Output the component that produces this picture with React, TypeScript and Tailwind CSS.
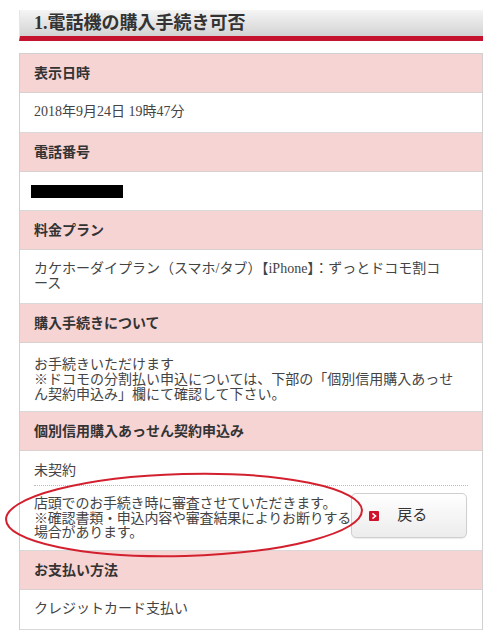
const font = { fontFamily: '"Liberation Serif", "Noto Sans CJK JP", serif' };

function Head({ children }: { children: React.ReactNode }) {
  return (
    <div className="h-[39px] flex items-center px-[14px] bg-[#f6d4d4] border-b border-[#d9d0d0] text-[14px] font-bold text-[#333]">
      {children}
    </div>
  );
}

function Value({ h, pt = "pt-[11px]", children }: { h: string; pt?: string; children: React.ReactNode }) {
  return (
    <div className={`${h} ${pt} overflow-hidden px-[14px] leading-[15px] text-[14px] text-[#444] border-b border-[#d9d9d9] bg-white`}>
      {children}
    </div>
  );
}

export default function App() {
  return (
    <div className="relative w-[500px] h-[644px] bg-white overflow-hidden" style={font}>
      <div className="pl-[19px] pr-[17px] pt-[10px]">
        <div className="h-[31px] bg-gradient-to-b from-[#f5f5f5] to-[#d3d3d3] border-l border-[#e6e6e6] border-b-[5px] border-b-[#c4122f] flex items-center pl-[14px]">
          <span className="text-[18px] font-bold text-[#333] leading-none">
            1.電話機の購入手続き可否
          </span>
        </div>

        <div className="mt-[12px] border-x border-t border-[#d0d0d0]">
          <Head>表示日時</Head>
          <Value h="h-[40px]">2018年9月24日 19時47分</Value>

          <Head>電話番号</Head>
          <Value h="h-[39px]">
            <div className="h-[15px] flex items-center pt-[2px]">
              <div className="ml-[-3px] w-[92px] h-[13px] bg-black" />
            </div>
          </Value>

          <Head>料金プラン</Head>
          <Value h="h-[54px]">
            カケホーダイプラン（スマホ/タブ）【iPhone】：ずっとドコモ割コ
            <br />
            ース
          </Value>

          <Head>購入手続きについて</Head>
          <Value h="h-[69px]" pt="pt-[14px]">
            お手続きいただけます
            <br />
            ※ドコモの分割払い申込については、下部の「個別信用購入あっせ
            <br />
            ん契約申込み」欄にて確認して下さい。
          </Value>

          <Head>個別信用購入あっせん契約申込み</Head>
          <div className="h-[100px] px-[14px] pt-[12px] text-[14px] text-[#444] border-b border-[#d9d9d9]">
            <div className="h-[23px] leading-[15px] border-b border-dotted border-[#bbb]">未契約</div>
            <div className="flex items-start justify-between pt-[7px]">
              <div className="leading-[14.5px] pt-[4px] whitespace-nowrap tracking-[-0.2px]">
                店頭でのお手続き時に審査させていただきます。
                <br />
                ※確認書類・申込内容や審査結果によりお断りする
                <br />
                場合があります。
              </div>
              <button className="shrink-0 w-[116px] h-[45px] mr-[1px] rounded-[5px] border border-[#cfcfcf] bg-gradient-to-b from-white to-[#ececec] flex items-center pl-[17px] gap-[18px] text-[#333] text-[15px] shadow-[0_1px_1px_rgba(0,0,0,0.08)]">
                <span className="w-[10px] h-[10px] bg-[#d0112b] rounded-[1px] flex items-center justify-center">
                  <svg width="6" height="6" viewBox="0 0 6 6">
                    <path d="M1.5 0.5 L4.5 3 L1.5 5.5" fill="none" stroke="#fff" strokeWidth="1.6" />
                  </svg>
                </span>
                <span>戻る</span>
              </button>
            </div>
          </div>

          <Head>お支払い方法</Head>
          <Value h="h-[40px]">クレジットカード支払い</Value>
        </div>
      </div>

      <svg className="absolute left-0 top-0 pointer-events-none" width="500" height="644">
        <ellipse
          cx="184"
          cy="515"
          rx="178"
          ry="41"
          fill="none"
          stroke="#d3202f"
          strokeWidth="2"
          transform="rotate(-1.5 184 515)"
        />
      </svg>
    </div>
  );
}
